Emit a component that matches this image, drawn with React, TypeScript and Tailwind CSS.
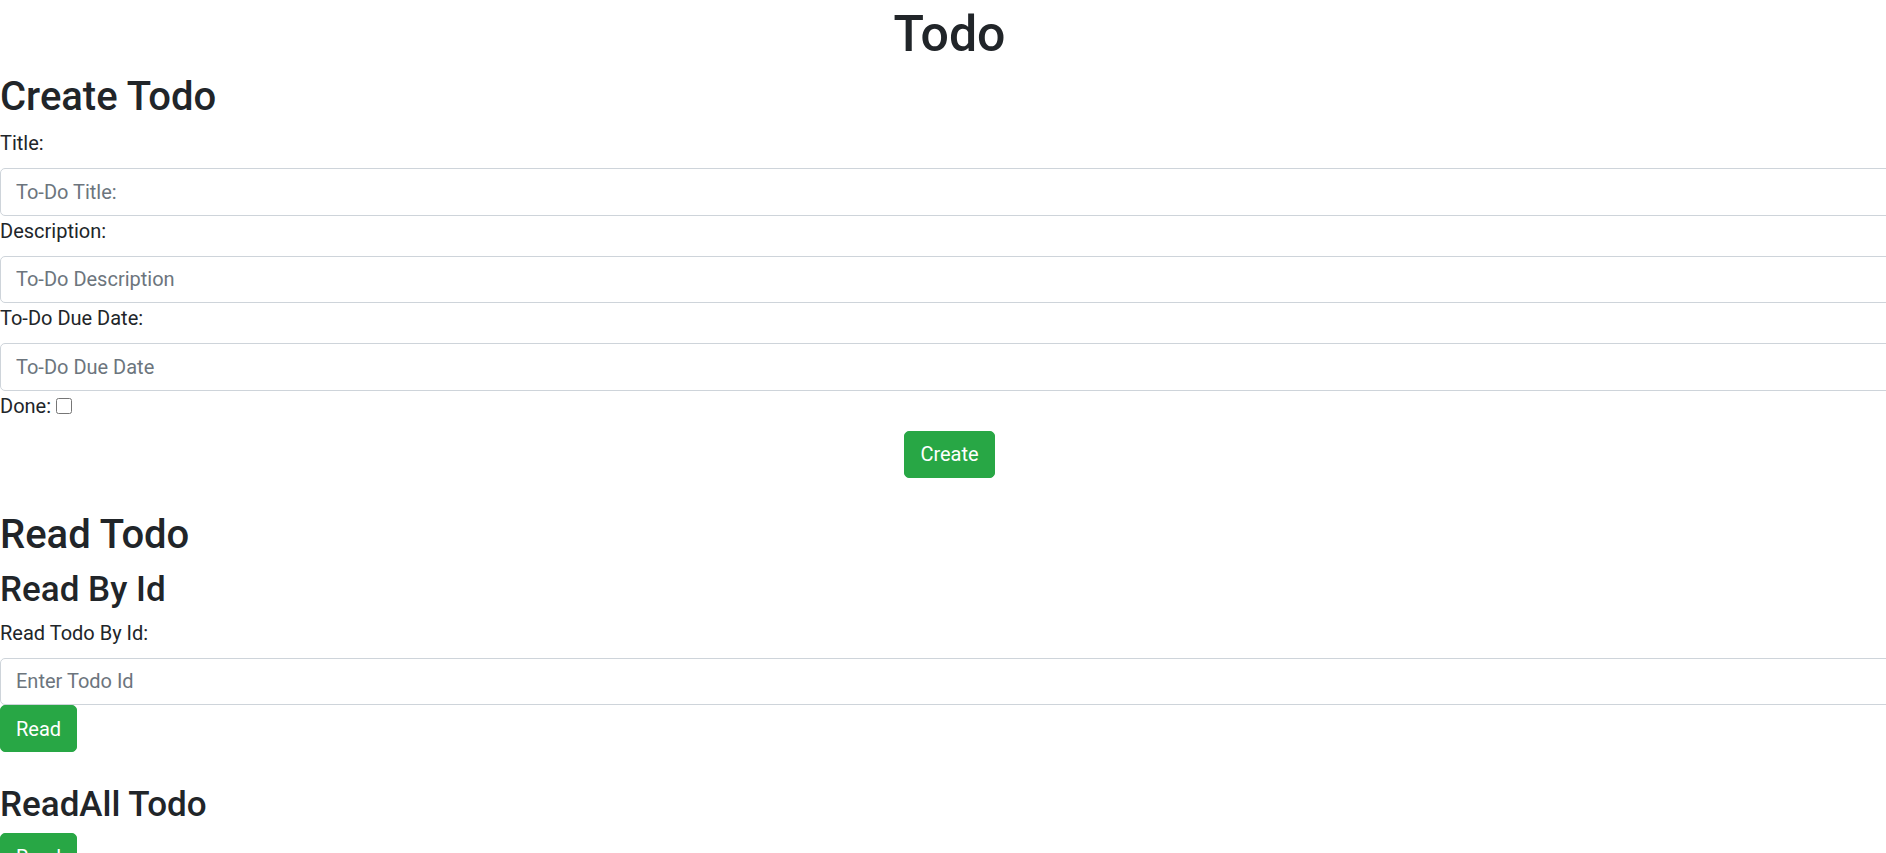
import React, { useState } from 'react';

const inputCls =
  'block w-full h-[47.5px] px-[15px] py-[7.5px] text-[20px] leading-[1.5] text-[#495057] bg-white border border-[#ced4da] rounded-[5px] placeholder:text-[#6c757d] outline-none';

const btnCls =
  'inline-block px-[15px] py-[7.5px] text-[20px] leading-[1.5] text-white bg-[#28a745] border border-[#28a745] rounded-[5px]';

const App: React.FC = () => {
  const [title, setTitle] = useState('');
  const [description, setDescription] = useState('');
  const [dueDate, setDueDate] = useState('');
  const [done, setDone] = useState(false);
  const [todoId, setTodoId] = useState('');

  return (
    <div className="w-full min-h-screen overflow-x-hidden bg-white">
      <div className="w-[1899px] text-[20px] leading-[1.5] text-[#212529] font-['Roboto',sans-serif]">
        <h1 className="text-center text-[50px] leading-[1.2] font-medium pt-[4px] mb-[6px]">Todo</h1>

        {/* Create */}
        <section>
          <h2 className="text-[40px] leading-[1.2] font-medium pt-[3px] mb-[7px]">Create Todo</h2>
          <form onSubmit={(e) => e.preventDefault()}>
            <label className="inline-block mb-[10px]">Title:</label>
            <input className={inputCls} placeholder="To-Do Title:" value={title} onChange={(e) => setTitle(e.target.value)} />
            <label className="inline-block mb-[10px]">Description:</label>
            <input className={inputCls} placeholder="To-Do Description" value={description} onChange={(e) => setDescription(e.target.value)} />
            <label className="inline-block mb-[10px]">To-Do Due Date:</label>
            <input className={inputCls} placeholder="To-Do Due Date" value={dueDate} onChange={(e) => setDueDate(e.target.value)} />
            <label className="inline-flex items-center gap-[5px] mb-[10px]">
              Done:
              <input type="checkbox" className="w-[16px] h-[16px]" checked={done} onChange={(e) => setDone(e.target.checked)} />
            </label>
            <div className="text-center">
              <button type="submit" className={btnCls}>Create</button>
            </div>
          </form>
        </section>

        {/* Read */}
        <section className="mt-[30px]">
          <h2 className="text-[40px] leading-[1.2] font-medium pt-[3px] mb-[7px]">Read Todo</h2>
          <h3 className="text-[35px] leading-[1.2] font-medium pt-[3px] mb-[7px]">Read By Id</h3>
          <label className="inline-block mb-[10px]">Read Todo By Id:</label>
          <input className={inputCls} placeholder="Enter Todo Id" value={todoId} onChange={(e) => setTodoId(e.target.value)} />
          <button className={btnCls}>Read</button>

          <h3 className="mt-[29px] text-[35px] leading-[1.2] font-medium pt-[3px] mb-[7px]">ReadAll Todo</h3>
          <button className={btnCls}>Read</button>
        </section>
      </div>
    </div>
  );
};

export default App;
